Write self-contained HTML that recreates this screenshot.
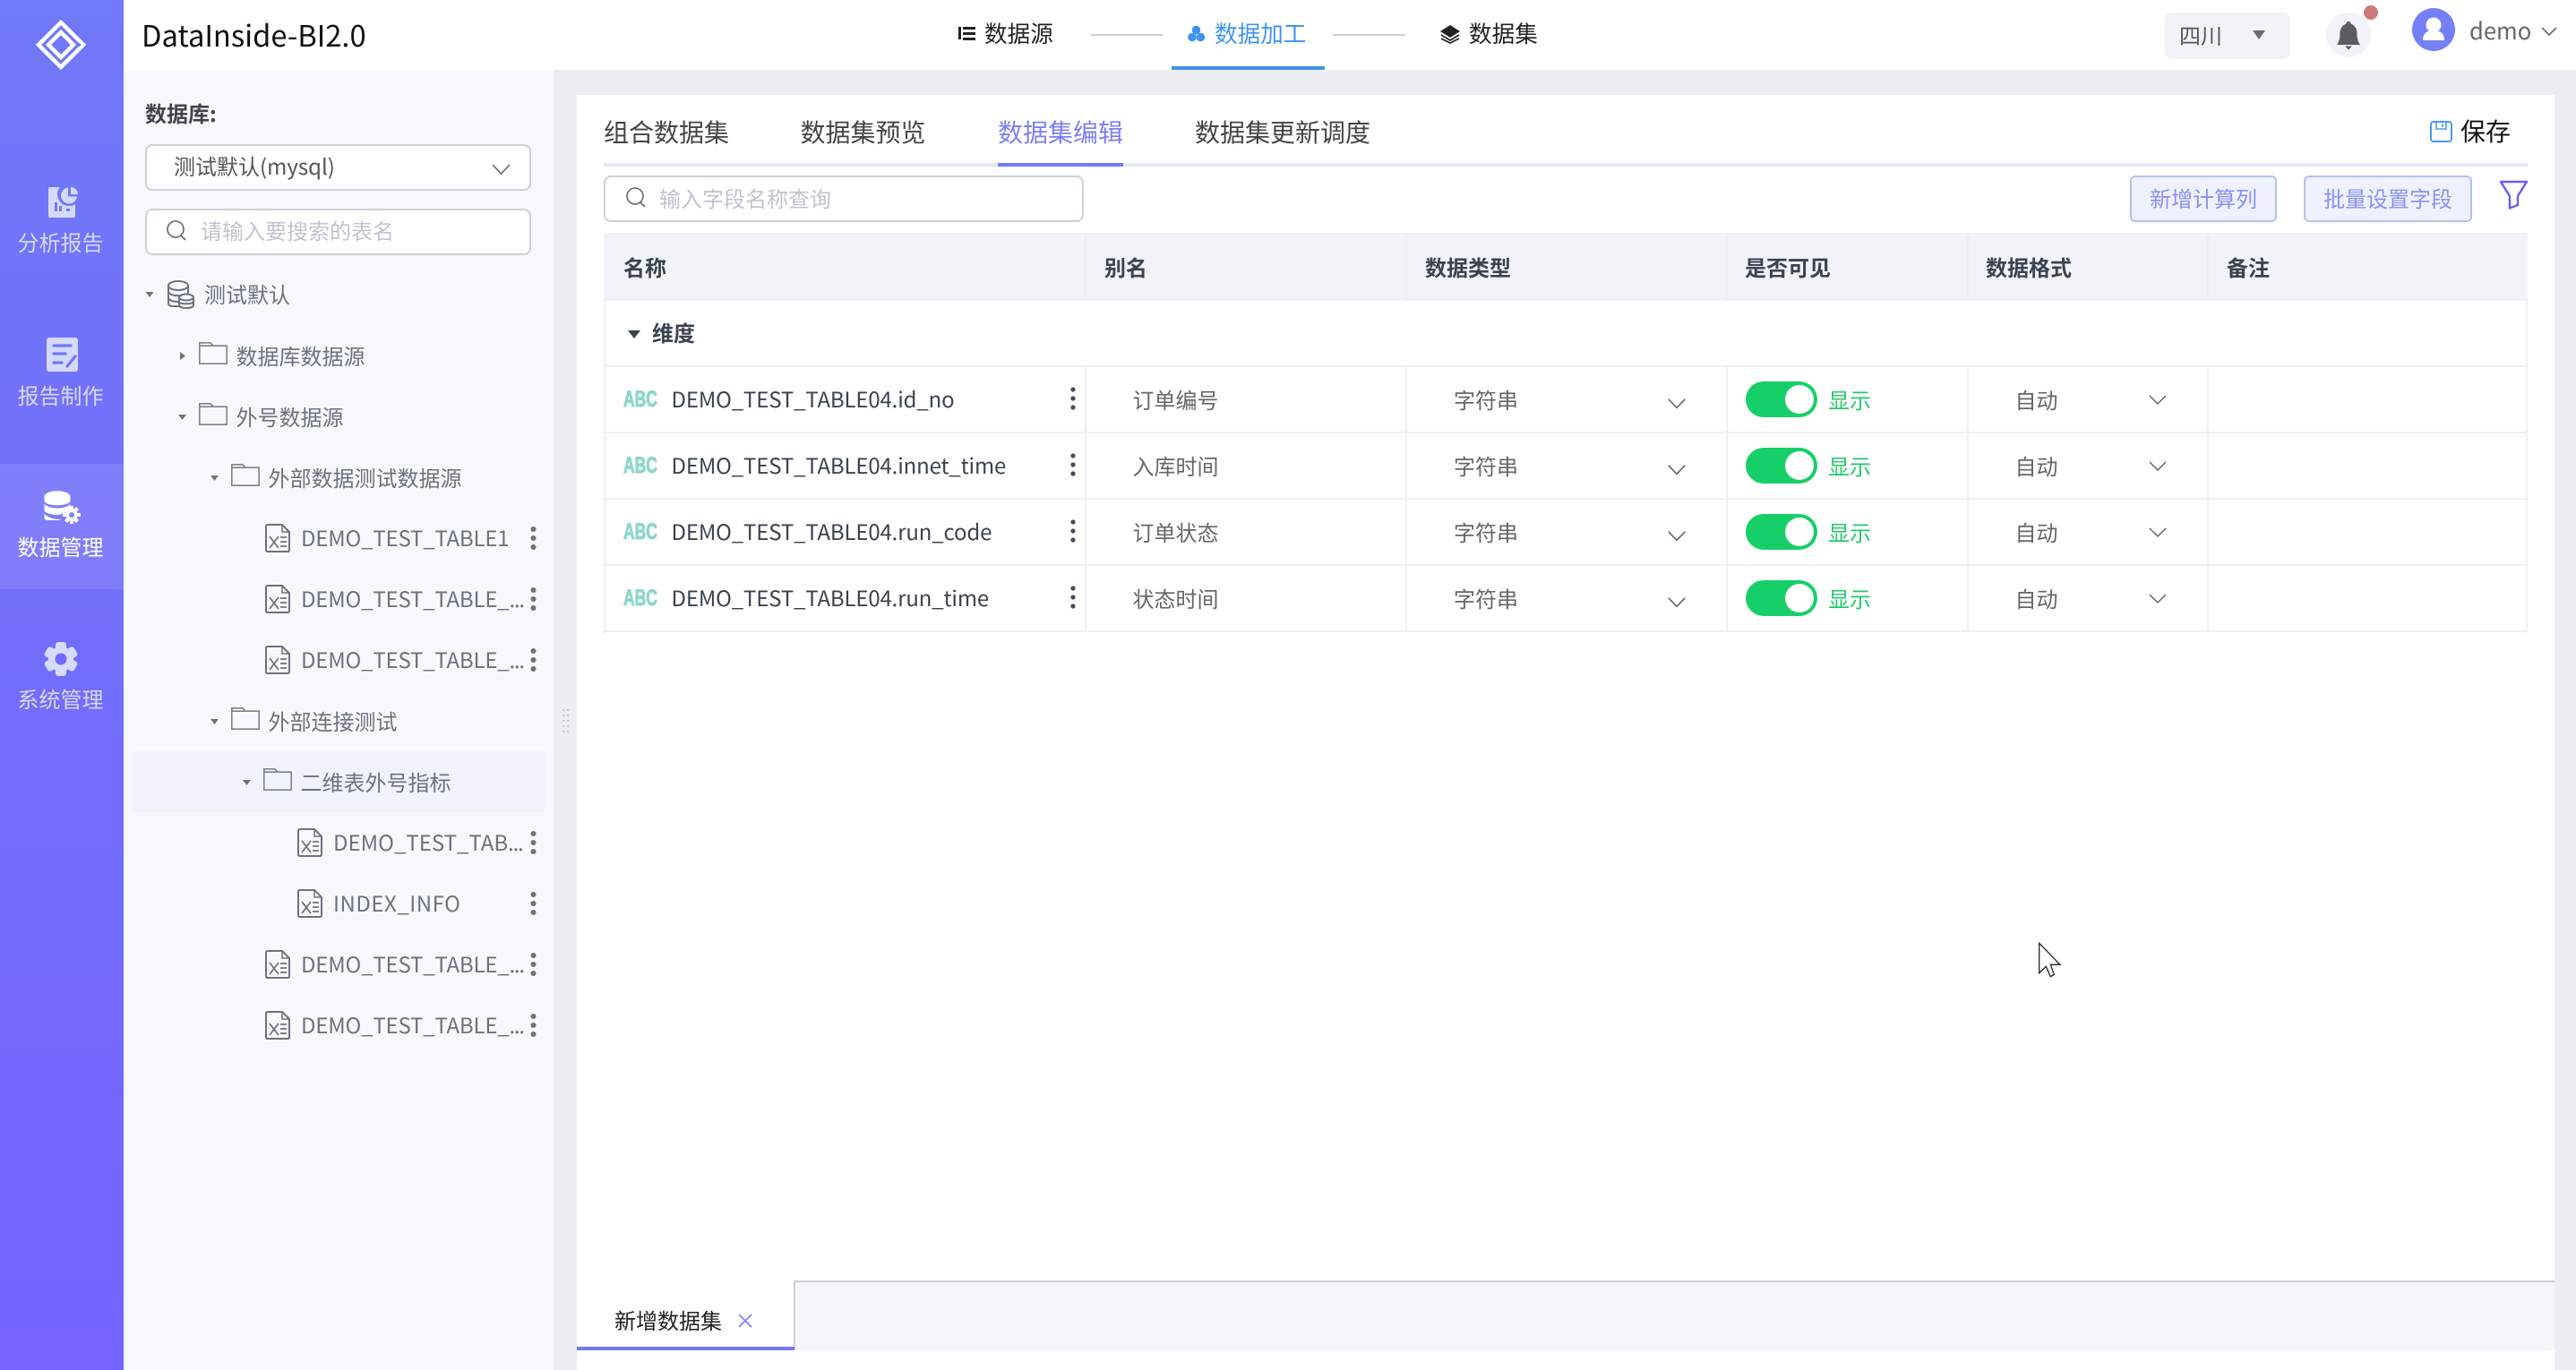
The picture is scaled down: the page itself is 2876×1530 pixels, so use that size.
<!DOCTYPE html>
<html lang="zh-CN"><head><meta charset="utf-8"><title>DataInside-BI2.0</title>
<style>
html,body{margin:0;padding:0;width:2876px;height:1530px;overflow:hidden;background:#ecedf3}
body{position:relative;font-family:"Noto Sans CJK SC","Liberation Sans",sans-serif;font-size:24px;color:#666}
.b{position:absolute;box-sizing:border-box}
.t{position:absolute;white-space:nowrap;line-height:40px;height:40px;margin-top:-20px}
.tree{color:#6b7280}
.l{letter-spacing:-.2px;margin-top:-21px;margin-left:-1px}
.l i{font-style:normal;letter-spacing:-1.2px}
.nav{color:#d6d9fe;width:138px;left:-1.5px;text-align:center;margin-top:-21px}
.h{font-weight:700;color:#3a4350}
.n{color:#3a4350;letter-spacing:-.16px;margin-left:-.5px;margin-top:-21px}
.abc{color:#8fd6cb;font-weight:700;font-size:25px;font-family:"Liberation Sans",sans-serif;transform:scaleX(.7);transform-origin:left center;-webkit-text-stroke:1px #8fd6cb;margin-top:-19px}
.g{color:#22c96a}
svg{position:absolute;left:0;top:0}
</style></head><body>
<div class="b" style="left:0;top:0;width:138px;height:1530px;background:linear-gradient(180deg,#7079f8,#7562ff)"></div>
<div class="b" style="left:0;top:518px;width:138px;height:140px;background:rgba(255,255,255,.1)"></div>
<div class="b" style="left:138px;top:0;width:2738px;height:78px;background:#fff"></div>
<div class="b" style="left:138px;top:78px;width:480px;height:1452px;background:#f6f8fc"></div>
<div class="b" style="left:644px;top:106px;width:2208px;height:1424px;background:#fff"></div>

<div class="t" style="left:158px;top:38.500px;font-size:32.7px;color:#111">DataInside-BI2.0</div>
<div class="t" style="left:1099px;top:37px;font-size:25.6px;color:#222">数据源</div>
<div class="t" style="left:1356px;top:37px;font-size:25.6px;color:#3f94ee">数据加工</div>
<div class="t" style="left:1640px;top:37px;font-size:25.6px;color:#222">数据集</div>
<div class="b" style="left:1218px;top:38px;width:80px;height:2px;background:#ccc"></div>
<div class="b" style="left:1488px;top:38px;width:81px;height:2px;background:#ccc"></div>
<div class="b" style="left:1308px;top:74px;width:171px;height:4px;background:#3f94ee"></div>

<div class="b" style="left:2417px;top:14px;width:140px;height:52px;background:#f2f3f8;border-radius:8px"></div>
<div class="t" style="left:2433px;top:39px;color:#555">四川</div>
<div class="b" style="left:2597px;top:14px;width:50px;height:50px;background:#f2f3f8;border-radius:50%"></div>
<div class="t" style="left:2757px;top:34px;font-size:25.6px;color:#666">demo</div>

<div class="nav t" style="top:271px">分析报告</div>
<div class="nav t" style="top:442px">报告制作</div>
<div class="nav t" style="top:611px;color:#fff">数据管理</div>
<div class="nav t" style="top:781px">系统管理</div>

<div class="t" style="left:162px;top:126px;font-weight:700;color:#444">数据库:</div>
<div class="b" style="left:162px;top:161px;width:431px;height:52px;background:#fff;border:2px solid #ccd1d9;border-radius:8px"></div>
<div class="t" style="left:194px;top:185px;color:#555">测试默认(mysql)</div>
<div class="b" style="left:162px;top:233px;width:431px;height:52px;background:#fff;border:2px solid #ccd1d9;border-radius:8px"></div>
<div class="t" style="left:224px;top:257px;color:#c0c4cc">请输入要搜索的表名</div>

<div class="t tree" style="left:228px;top:328px">测试默认</div>
<div class="t tree" style="left:263.500px;top:397px">数据库数据源</div>
<div class="t tree" style="left:263.500px;top:465px">外号数据源</div>
<div class="t tree" style="left:299.500px;top:533px">外部数据测试数据源</div>
<div class="t tree l" style="left:337px;top:601px">DEMO_TEST_TABLE1</div>
<div class="t tree l" style="left:337px;top:669px">DEMO_TEST_TABLE_<i>...</i></div>
<div class="t tree l" style="left:337px;top:737px">DEMO_TEST_TABLE_<i>...</i></div>
<div class="t tree" style="left:299.500px;top:805px">外部连接测试</div>
<div class="b" style="left:148px;top:839px;width:460px;height:68px;background:#f0f3fb"></div>
<div class="t tree" style="left:335.500px;top:873px">二维表外号指标</div>
<div class="t tree l" style="left:373px;top:941px;letter-spacing:0">DEMO_TEST_TAB<i>...</i></div>
<div class="t tree l" style="left:373px;top:1009px;letter-spacing:.5px">INDEX_INFO</div>
<div class="t tree l" style="left:337px;top:1077px">DEMO_TEST_TABLE_<i>...</i></div>
<div class="t tree l" style="left:337px;top:1145px">DEMO_TEST_TABLE_<i>...</i></div>

<div class="t" style="left:674px;top:147px;font-size:28px;color:#444">组合数据集</div>
<div class="t" style="left:893.500px;top:147px;font-size:28px;color:#444">数据集预览</div>
<div class="t" style="left:1114px;top:147px;font-size:28px;color:#7b7ff5">数据集编辑</div>
<div class="t" style="left:1334px;top:147px;font-size:28px;color:#444">数据集更新调度</div>
<div class="t" style="left:2747px;top:146px;font-size:28px;color:#111">保存</div>
<div class="b" style="left:674px;top:182px;width:2148px;height:4px;background:#e5e9f1"></div>
<div class="b" style="left:1114px;top:182px;width:140px;height:4px;background:#7579f6"></div>

<div class="b" style="left:674px;top:196px;width:536px;height:52px;border:2px solid #ccd1d9;border-radius:8px;background:#fff"></div>
<div class="t" style="left:736px;top:221px;color:#c0c4cc">输入字段名称查询</div>
<div class="b" style="left:2378px;top:196px;width:164px;height:52px;border:2px solid #b5c0f0;border-radius:6px;background:#eff2fe"></div>
<div class="t" style="left:2400px;top:221px;color:#8a90f5">新增计算列</div>
<div class="b" style="left:2572px;top:196px;width:188px;height:52px;border:2px solid #b5c0f0;border-radius:6px;background:#eff2fe"></div>
<div class="t" style="left:2594px;top:221px;color:#8a90f5">批量设置字段</div>

<div class="b" style="left:674px;top:260px;width:2148px;height:75px;background:#f2f3f8"></div>
<div class="b" style="left:674px;top:334px;width:2148px;height:2px;background:#eff0f6"></div>
<div class="b" style="left:1211px;top:260px;width:2px;height:74px;background:#eceef4"></div>
<div class="b" style="left:1569px;top:260px;width:2px;height:74px;background:#eceef4"></div>
<div class="b" style="left:1927px;top:260px;width:2px;height:74px;background:#eceef4"></div>
<div class="b" style="left:2196px;top:260px;width:2px;height:74px;background:#eceef4"></div>
<div class="b" style="left:2464px;top:260px;width:2px;height:74px;background:#eceef4"></div>
<div class="t h" style="left:696px;top:298px">名称</div>
<div class="t h" style="left:1233px;top:298px">别名</div>
<div class="t h" style="left:1591px;top:298px">数据类型</div>
<div class="t h" style="left:1948px;top:298px">是否可见</div>
<div class="t h" style="left:2217px;top:298px">数据格式</div>
<div class="t h" style="left:2486px;top:298px">备注</div>
<div class="t h" style="left:728px;top:371px">维度</div>

<div class="b" style="left:674px;top:335px;width:2px;height:372px;background:#eff0f6"></div>
<div class="b" style="left:2820px;top:335px;width:2px;height:372px;background:#eff0f6"></div>
<div class="b" style="left:674px;top:408px;width:2148px;height:2px;background:#eff0f6"></div>
<div class="b" style="left:674px;top:482px;width:2148px;height:2px;background:#eff0f6"></div>
<div class="b" style="left:674px;top:556px;width:2148px;height:2px;background:#eff0f6"></div>
<div class="b" style="left:674px;top:630px;width:2148px;height:2px;background:#eff0f6"></div>
<div class="b" style="left:674px;top:704px;width:2148px;height:2px;background:#eff0f6"></div>
<div class="b" style="left:1211px;top:410px;width:2px;height:295px;background:#eff0f6"></div>
<div class="b" style="left:1569px;top:410px;width:2px;height:295px;background:#eff0f6"></div>
<div class="b" style="left:1927px;top:410px;width:2px;height:295px;background:#eff0f6"></div>
<div class="b" style="left:2196px;top:410px;width:2px;height:295px;background:#eff0f6"></div>
<div class="b" style="left:2464px;top:410px;width:2px;height:295px;background:#eff0f6"></div>

<div class="t abc" style="left:696px;top:445px">ABC</div><div class="t n" style="left:750px;top:446px">DEMO_TEST_TABLE04.id_no</div><div class="t" style="left:1264.500px;top:446px">订单编号</div><div class="t" style="left:1623px;top:446px">字符串</div><div class="t g" style="left:2041px;top:446px">显示</div><div class="t" style="left:2249.500px;top:446px">自动</div>
<div class="t abc" style="left:696px;top:519px">ABC</div><div class="t n" style="left:750px;top:520px">DEMO_TEST_TABLE04.innet_time</div><div class="t" style="left:1264.500px;top:520px">入库时间</div><div class="t" style="left:1623px;top:520px">字符串</div><div class="t g" style="left:2041px;top:520px">显示</div><div class="t" style="left:2249.500px;top:520px">自动</div>
<div class="t abc" style="left:696px;top:593px">ABC</div><div class="t n" style="left:750px;top:594px">DEMO_TEST_TABLE04.run_code</div><div class="t" style="left:1264.500px;top:594px">订单状态</div><div class="t" style="left:1623px;top:594px">字符串</div><div class="t g" style="left:2041px;top:594px">显示</div><div class="t" style="left:2249.500px;top:594px">自动</div>
<div class="t abc" style="left:696px;top:667px">ABC</div><div class="t n" style="left:750px;top:668px">DEMO_TEST_TABLE04.run_time</div><div class="t" style="left:1264.500px;top:668px">状态时间</div><div class="t" style="left:1623px;top:668px">字符串</div><div class="t g" style="left:2041px;top:668px">显示</div><div class="t" style="left:2249.500px;top:668px">自动</div>

<div class="b" style="left:886px;top:1430px;width:1966px;height:78px;background:#f5f6fa;border-left:2px solid #ccd1d9;border-top:2px solid #ccd1d9"></div>
<div class="b" style="left:644px;top:1504px;width:243px;height:4px;background:#7579f6"></div>
<div class="t" style="left:686px;top:1474px;color:#222">新增数据集</div>

<svg width="2876" height="1530" viewBox="0 0 2876 1530" fill="none">
<defs>
<symbol id="folder" viewBox="0 0 32 25" overflow="visible"><path d="M.8 24.2V.8H13L16 4.2H31.2V24.2ZM.8 4.2H16" stroke="#7b8390" stroke-width="1.6"/></symbol>
<symbol id="file" viewBox="0 0 28 32" overflow="visible"><path d="M3 1H19L27 9V29Q27 31 25 31H3Q1 31 1 29V3Q1 1 3 1Z" stroke="#6b7280" stroke-width="2"/><path d="M19 1V9H27" stroke="#6b7280" stroke-width="1.5"/><path d="M5 14L15 27M15 14L5 27" stroke="#6b7280" stroke-width="1.8"/><path d="M17 15H24M17 20H24M17 25H24" stroke="#6b7280" stroke-width="1.8"/></symbol>
<symbol id="dots" viewBox="0 0 8 28" overflow="visible"><circle cx="4" cy="4" r="3" fill="#6b7280"/><circle cx="4" cy="14" r="3" fill="#6b7280"/><circle cx="4" cy="24" r="3" fill="#6b7280"/></symbol>
<symbol id="dd" viewBox="0 0 8 28" overflow="visible"><circle cx="4" cy="4" r="2.6" fill="#444c5a"/><circle cx="4" cy="14" r="2.6" fill="#444c5a"/><circle cx="4" cy="24" r="2.6" fill="#444c5a"/></symbol>
<symbol id="chevL" viewBox="0 0 20 11" overflow="visible"><path d="M.7.7L10 10.3 19.3.7" stroke="#666" stroke-width="1.6"/></symbol>
<symbol id="sw" viewBox="0 0 80 40" overflow="visible"><rect width="80" height="40" rx="20" fill="#17cf68"/><circle cx="60" cy="20" r="16" fill="#fff"/></symbol>
</defs>

<!-- logo -->
<path d="M68 25L93 50 68 75 43 50Z" stroke="#fff" stroke-width="4.5"/>
<path d="M68 36L82 50 68 64 54 50Z" stroke="#fff" stroke-width="4.5"/>
<circle cx="88" cy="50" r="2" fill="#7079f8"/>

<!-- sidebar icons -->
<rect x="54" y="209" width="30" height="34" rx="2" fill="#d6d9fe"/>
<circle cx="77" cy="217" r="13" fill="#7079f8"/>
<path d="M76 209.5A9 9 0 1 0 86 219.5H76Z" fill="#d6d9fe"/>
<path d="M79 209A8 8 0 0 1 87 217H79Z" fill="#d6d9fe"/>
<path d="M61 226h3v10h-3zM66 230h3v6h-3zM74 233h4v3h-4z" fill="#7079f8"/>
<rect x="52" y="377" width="35" height="38" rx="3" fill="#d6d9fe"/>
<path d="M60 386H79M60 395H73M60 405H69M84 398L75 409" stroke="#7077f9" stroke-width="3.2" stroke-linecap="round"/>

<path d="M49.5 555C49.5 546 78.500 546 78.500 555V559C78.500 566 49.500 566 49.500 559Z" fill="#fff"/>
<path d="M49.500 563C55 569 73 569 78.500 563V570C70 574 66 575 64 575 56 575 49.500 572 49.500 570Z" fill="#fff"/>
<path d="M49.500 574C55 579 62 580 66 580L68 581H54C51 581 49.500 580 49.500 578Z" fill="#fff"/>
<g fill="#fff"><circle cx="80" cy="575" r="6.500"/><path d="M78 565h4v4h-4zM78 581h4v4h-4zM70 573h4v4h-4zM86 573h4v4h-4z"/><path d="M72 569l3-3 3 3-3 3zM82 569l3-3 3 3-3 3zM72 581l3-3 3 3-3 3zM82 581l3-3 3 3-3 3z"/></g>
<circle cx="80" cy="575" r="3" fill="#7f85f8"/>

<g fill="#d8dafe"><circle cx="68" cy="736" r="14"/><rect x="62" y="717" width="12" height="38" rx="3"/><rect x="62" y="717" width="12" height="38" rx="3" transform="rotate(60 68 736)"/><rect x="62" y="717" width="12" height="38" rx="3" transform="rotate(120 68 736)"/></g>
<circle cx="68" cy="736" r="6.500" fill="#7169fc"/>

<!-- top nav -->
<path d="M1070 30h3v14h-3zM1075 30h14v3h-14zM1075 36h14v3h-14zM1075 42h14v3h-14z" fill="#222"/>
<circle cx="1335.500" cy="33.500" r="4.800" fill="#3f94ee"/><circle cx="1331" cy="41.500" r="4.800" fill="#3f94ee"/><circle cx="1340.500" cy="41.500" r="4.800" fill="#3f94ee"/>
<path d="M1619 28L1630 35 1619 42 1608 35Z" fill="#222"/>
<path d="M1609 39L1619 45 1629 39M1609 43L1619 48 1629 43" stroke="#222" stroke-width="1.800"/>

<!-- region select / bell / avatar -->
<path d="M2515 34h14l-7 10Z" fill="#666b73"/>
<path d="M2622 24c-1.500 0-2.500 1-2.500 2.500-5 2-7 6-7 11 0 5-1 9-3.500 12.500h26c-2.500-3.500-3.500-7.500-3.500-12.500 0-5-2-9-7-11 0-1.500-1-2.500-2.500-2.500Z" fill="#5a5b63"/>
<path d="M2618 51.500h8l-4 4Z" fill="#5a5b63"/>
<circle cx="2647" cy="14" r="8" fill="#cc7a7a"/>
<circle cx="2717" cy="33" r="24" fill="#7580f6"/>
<circle cx="2717" cy="28" r="8.500" fill="#fff"/>
<path d="M2705 45c0-8 5-11 12-11s12 3 12 11Z" fill="#fff"/>
<path d="M2838 31l8 8 8-8" stroke="#666" stroke-width="1.600"/>

<!-- left panel controls -->
<path d="M550 184l9.500 10 9.500-10" stroke="#666" stroke-width="1.600"/>
<circle cx="196" cy="256" r="9" stroke="#666" stroke-width="1.600"/><path d="M202 263l5 5" stroke="#666" stroke-width="1.600"/>

<!-- tree carets -->
<g fill="#6b7280"><path d="M162.500 326h9l-4.500 6Z"/><path d="M201 393v9l6-4.500Z"/><path d="M199 463h9l-4.500 6Z"/><path d="M235 531h9l-4.500 6Z"/><path d="M235 803h9l-4.500 6Z"/><path d="M271 871h9l-4.500 6Z"/></g>

<!-- db tree icon -->
<g stroke="#6b7280" stroke-width="2"><ellipse cx="199" cy="319" rx="11" ry="5"/><path d="M188 319V338Q188 342 193 342H200M188 326Q190 331 203 330M188 333Q190 337 200 337M210 319V328"/><ellipse cx="208" cy="332" rx="8" ry="3.500"/><path d="M200 332V341C200 345 216 345 216 341V332M200 337C200 340 216 340 216 337"/></g>

<use href="#folder" x="222" y="382" width="32" height="25"/>
<use href="#folder" x="222" y="450" width="32" height="25"/>
<use href="#folder" x="258" y="518" width="32" height="25"/>
<use href="#folder" x="258" y="790" width="32" height="25"/>
<use href="#folder" x="294" y="858" width="32" height="25"/>
<use href="#file" x="296" y="585" width="28" height="32"/>
<use href="#file" x="296" y="653" width="28" height="32"/>
<use href="#file" x="296" y="721" width="28" height="32"/>
<use href="#file" x="332" y="925" width="28" height="32"/>
<use href="#file" x="332" y="993" width="28" height="32"/>
<use href="#file" x="296" y="1061" width="28" height="32"/>
<use href="#file" x="296" y="1129" width="28" height="32"/>
<use href="#dots" x="591.500" y="587" width="8" height="28"/>
<use href="#dots" x="591.500" y="655" width="8" height="28"/>
<use href="#dots" x="591.500" y="723" width="8" height="28"/>
<use href="#dots" x="591.500" y="927" width="8" height="28"/>
<use href="#dots" x="591.500" y="995" width="8" height="28"/>
<use href="#dots" x="591.500" y="1063" width="8" height="28"/>
<use href="#dots" x="591.500" y="1131" width="8" height="28"/>
<path d="M628 792h2v2h-2zM633 792h2v2h-2zM628 798h2v2h-2zM633 798h2v2h-2zM628 804h2v2h-2zM633 804h2v2h-2zM628 810h2v2h-2zM633 810h2v2h-2zM628 816h2v2h-2zM633 816h2v2h-2z" fill="#c0c4cc"/>

<!-- save -->
<rect x="2714" y="136" width="23" height="22" rx="3" stroke="#4a9bf0" stroke-width="2"/>
<path d="M2720 136v8h11v-8M2727 138v4" stroke="#4a9bf0" stroke-width="1.600"/>

<!-- card search + filter -->
<circle cx="709" cy="219" r="9" stroke="#666" stroke-width="1.600"/><path d="M715 226l5 5" stroke="#666" stroke-width="1.600"/>
<path d="M2792 203H2821L2811 219V229L2802 232.500V219Z" stroke="#6a5cf5" stroke-width="2.400" stroke-linejoin="round"/>

<!-- table icons -->
<path d="M701 369h14l-7 9Z" fill="#3a4350"/>
<use href="#dd" x="1194" y="431" width="8" height="28"/>
<use href="#dd" x="1194" y="505" width="8" height="28"/>
<use href="#dd" x="1194" y="579" width="8" height="28"/>
<use href="#dd" x="1194" y="653" width="8" height="28"/>
<use href="#chevL" x="1862" y="445" width="20" height="11"/>
<use href="#chevL" x="1862" y="519" width="20" height="11"/>
<use href="#chevL" x="1862" y="593" width="20" height="11"/>
<use href="#chevL" x="1862" y="667" width="20" height="11"/>
<use href="#sw" x="1949" y="426" width="80" height="40"/>
<use href="#sw" x="1949" y="500" width="80" height="40"/>
<use href="#sw" x="1949" y="574" width="80" height="40"/>
<use href="#sw" x="1949" y="648" width="80" height="40"/>
<path d="M2400 442l9 9 9-9M2400 516l9 9 9-9M2400 590l9 9 9-9M2400 664l9 9 9-9" stroke="#666" stroke-width="1.500"/>

<!-- bottom tab close -->
<path d="M825 1468l14 14M839 1468l-14 14" stroke="#7b85f5" stroke-width="1.800"/>

<!-- cursor -->
<path d="M2276.700 1053.300L2300 1077.300H2289.300L2293.300 1088.300 2289.300 1090.700 2284.300 1079.300 2276.700 1086.700Z" fill="#fff" stroke="#222" stroke-width="1.300"/>
</svg>
</body></html>
